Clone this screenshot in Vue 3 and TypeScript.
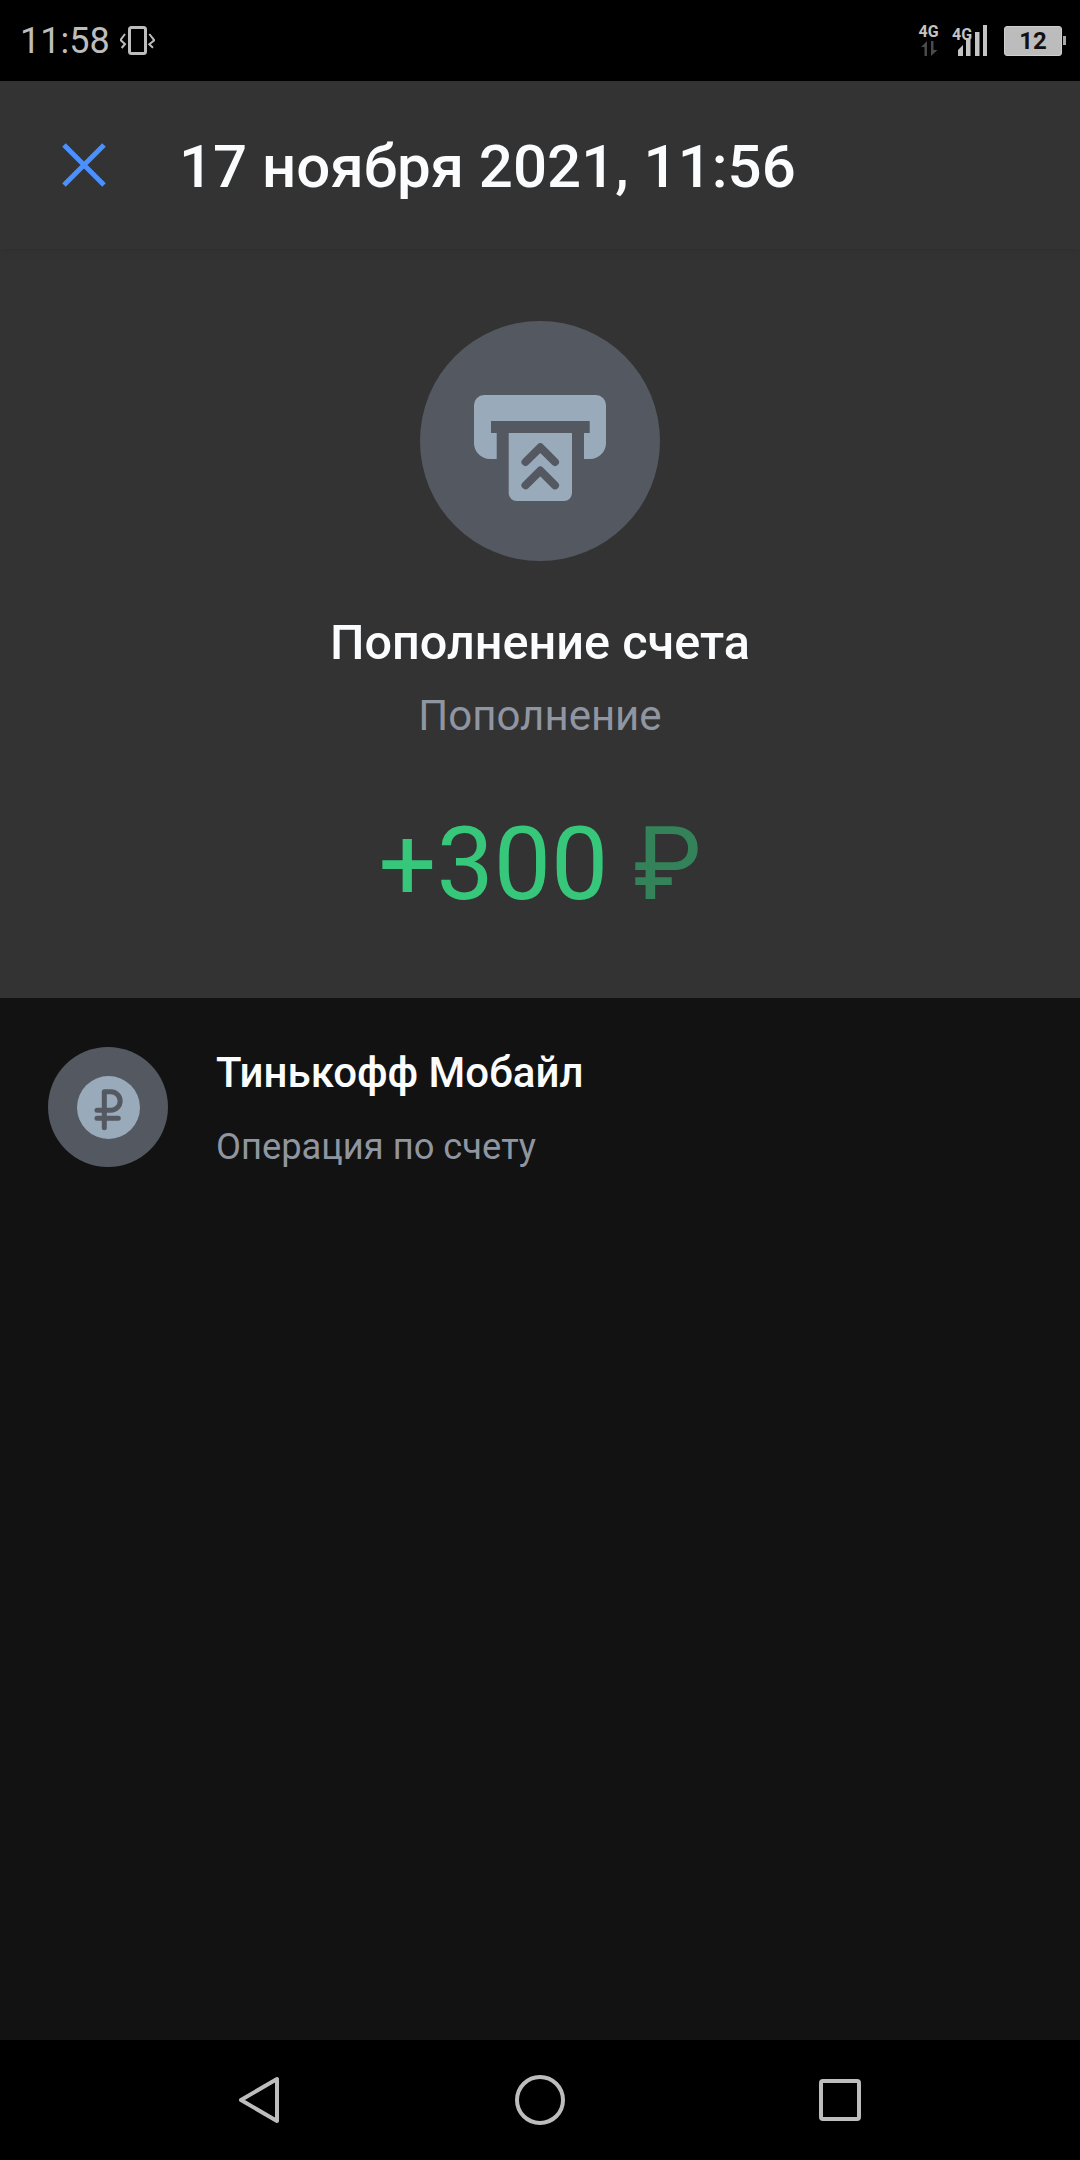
<script setup lang="ts">
const signalBars = [
  { x: 8, h: 17 },
  { x: 17, h: 24 },
  { x: 25, h: 31 },
];
</script>

<template>
  <div class="screen">
    <div class="status">
      <div class="status__left">
        <span class="status__time">11:58</span>
        <svg class="ic-vibrate" width="35" height="32" viewBox="0 0 35 32">
          <rect x="9.500" y="2.500" width="16" height="26" rx="2" fill="none" stroke="#bdbdbd" stroke-width="3" />
          <path d="M5 9 .5 15 5 19 1.700 23M29.300 9l5 6.300-5 4 3.700 3.400" fill="none" stroke="#bdbdbd" stroke-width="2" />
        </svg>
      </div>
      <div class="status__right">
        <div class="net">
          <span class="net__g">4G</span>
          <svg width="18" height="15" viewBox="0 0 18 15">
            <path d="M7 0v15H4.500V6H1zM11 0h2.500v9h4L11 15z" fill="#4a4a4a" />
          </svg>
        </div>
        <div class="net net--signal">
          <span class="net__g">4G</span>
          <svg class="bars" width="29" height="31" viewBox="0 0 29 31">
            <path d="M0 31v-6l5-5v11z" fill="#c4c4c4" />
            <rect v-for="b in signalBars" :key="b.x" :x="b.x" :y="31 - b.h" width="4.500" :height="b.h" fill="#c4c4c4" />
          </svg>
        </div>
        <div class="batt">
          <div class="batt__body">12</div>
          <div class="batt__tip"></div>
        </div>
      </div>
    </div>

    <div class="head">
      <button class="head__close" aria-label="Закрыть">
        <svg width="44" height="44" viewBox="0 0 44 44">
          <path d="M2 2 42 42M42 2 2 42" stroke="#4a90ff" stroke-width="5" fill="none" />
        </svg>
      </button>
      <div class="head__title">17 ноября 2021, 11:56</div>
    </div>

    <div class="summary">
      <div class="hero">
        <svg class="hero__ic" width="132" height="106" viewBox="54 74 132 106">
          <path d="M64 74h112a10 10 0 0 1 10 10v38a16 16 0 0 1-16 16h-6v-26h5.700v-12H71v12h5.700v26H70a16 16 0 0 1-16-16V84a10 10 0 0 1 10-10z" fill="#99aabb" />
          <path d="M88.700 112H152v60a8 8 0 0 1-8 8H96.700a8 8 0 0 1-8-8z" fill="#99aabb" />
          <path d="M105.500 141 120.300 126.300 135 141M105.500 164.300 120.300 149.600 135 164.300" fill="none" stroke="#545861" stroke-width="8" stroke-linecap="round" stroke-linejoin="round" />
        </svg>
      </div>
      <div class="summary__name">Пополнение счета</div>
      <div class="summary__cat">Пополнение</div>
      <div class="summary__amount">+300 <span class="summary__cur">₽</span></div>
    </div>

    <div class="list">
      <div class="row">
        <div class="row__ic">
          <div class="row__coin">
            <svg width="63" height="63" viewBox="28 28 63 63">
              <path d="M55.300 79.700V43.800h6.600a9.250 9.250 0 0 1 0 18.500H48M48 70.300h21.300" fill="none" stroke="#545861" stroke-width="5" stroke-linecap="round" stroke-linejoin="round" />
            </svg>
          </div>
        </div>
        <div class="row__text">
          <div class="row__title">Тинькофф Мобайл</div>
          <div class="row__sub">Операция по счету</div>
        </div>
      </div>
    </div>

    <div class="nav">
      <svg width="42" height="48" viewBox="0 0 42 48">
        <path d="M39 3v42L3 24z" fill="none" stroke="#bdbdbd" stroke-width="4" stroke-linejoin="round" />
      </svg>
      <svg class="nav__home" width="50" height="50" viewBox="0 0 50 50">
        <circle cx="25" cy="25" r="23" fill="none" stroke="#bdbdbd" stroke-width="4" />
      </svg>
      <svg class="nav__recent" width="42" height="42" viewBox="0 0 42 42">
        <rect x="2" y="2" width="38" height="38" rx="2" fill="none" stroke="#bdbdbd" stroke-width="4" />
      </svg>
    </div>
  </div>
</template>

<style>
html,
body {
  margin: 0;
  background: #000;
}
</style>

<style scoped>
.screen {
  width: 1080px;
  height: 2160px;
  display: flex;
  flex-direction: column;
  font-family: Roboto, "Liberation Sans", sans-serif;
  background: #121212;
  overflow: hidden;
}
.status {
  height: 81px;
  flex: none;
  background: #000;
  display: flex;
  justify-content: space-between;
  align-items: center;
  padding: 0 14px 0 20px;
}
.status__left {
  display: flex;
  align-items: center;
  gap: 10px;
}
.status__time {
  color: #bdbdbd;
  font-size: 36px;
}
.status__right {
  display: flex;
  align-items: center;
  gap: 14px;
}
.net {
  display: flex;
  flex-direction: column;
  align-items: center;
  width: 19px;
  gap: 3px;
}
.net--signal {
  width: 35px;
  position: relative;
  align-items: flex-end;
  gap: 0;
}
.net--signal .net__g {
  position: absolute;
  left: 0;
  top: 3px;
}
.net__g {
  color: #c4c4c4;
  font-size: 16px;
  font-weight: 700;
  line-height: 13px;
}
.batt {
  display: flex;
  align-items: center;
  margin-left: 3px;
}
.batt__body {
  width: 58px;
  height: 30px;
  box-sizing: border-box;
  background: #bcbcbc;
  border: 1px solid #cfcfcf;
  border-radius: 3px;
  color: #111;
  font-size: 24px;
  font-weight: 700;
  line-height: 28px;
  text-align: center;
}
.batt__tip {
  width: 3px;
  height: 9px;
  margin-left: 1px;
  background: #a8a8a8;
}
.head {
  height: 168px;
  flex: none;
  background: #333;
  display: flex;
  align-items: center;
  box-shadow: 0 2px 8px rgba(0, 0, 0, 0.1);
  position: relative;
  z-index: 1;
}
.head__close {
  width: 179px;
  padding: 0 0 0 62px;
  border: 0;
  background: none;
  display: flex;
}
.head__title {
  margin-top: 3px;
  color: #fbfcfd;
  font-size: 60px;
  font-weight: 500;
}
.summary {
  height: 749px;
  flex: none;
  box-sizing: border-box;
  background: #333;
  display: flex;
  flex-direction: column;
  align-items: center;
  padding-top: 72px;
}
.hero {
  width: 240px;
  height: 240px;
  border-radius: 50%;
  background: #545861;
  display: flex;
  align-items: center;
  justify-content: center;
}
.hero__ic {
  margin-top: 13px;
}
.summary__name {
  margin-top: 52px;
  color: #fbfcfd;
  font-size: 48.600px;
  font-weight: 500;
  line-height: 60px;
}
.summary__cat {
  margin-top: 13px;
  color: #9096a1;
  font-size: 42px;
  line-height: 60px;
}
.summary__amount {
  margin-top: 56px;
  color: #36c77b;
  font-size: 102px;
  line-height: 124px;
}
.summary__cur {
  color: #338259;
}
.list {
  flex: 1;
}
.row {
  display: flex;
  padding: 49px 48px 0;
  gap: 48px;
}
.row__ic {
  width: 120px;
  height: 120px;
  flex: none;
  border-radius: 50%;
  background: #545861;
  display: flex;
  align-items: center;
  justify-content: center;
}
.row__coin {
  width: 63px;
  height: 63px;
  border-radius: 50%;
  background: #99aabb;
  display: flex;
}
.row__text {
  display: flex;
  flex-direction: column;
  gap: 24px;
  margin-top: 1px;
}
.row__title {
  color: #fbfcfd;
  font-size: 42px;
  font-weight: 500;
  line-height: 50px;
}
.row__sub {
  color: #9096a1;
  font-size: 36.300px;
  line-height: 50px;
}
.nav {
  height: 120px;
  flex: none;
  background: #000;
  display: flex;
  align-items: center;
  padding-left: 238px;
}
.nav__home {
  margin-left: 235px;
}
.nav__recent {
  margin-left: 254px;
}
</style>
